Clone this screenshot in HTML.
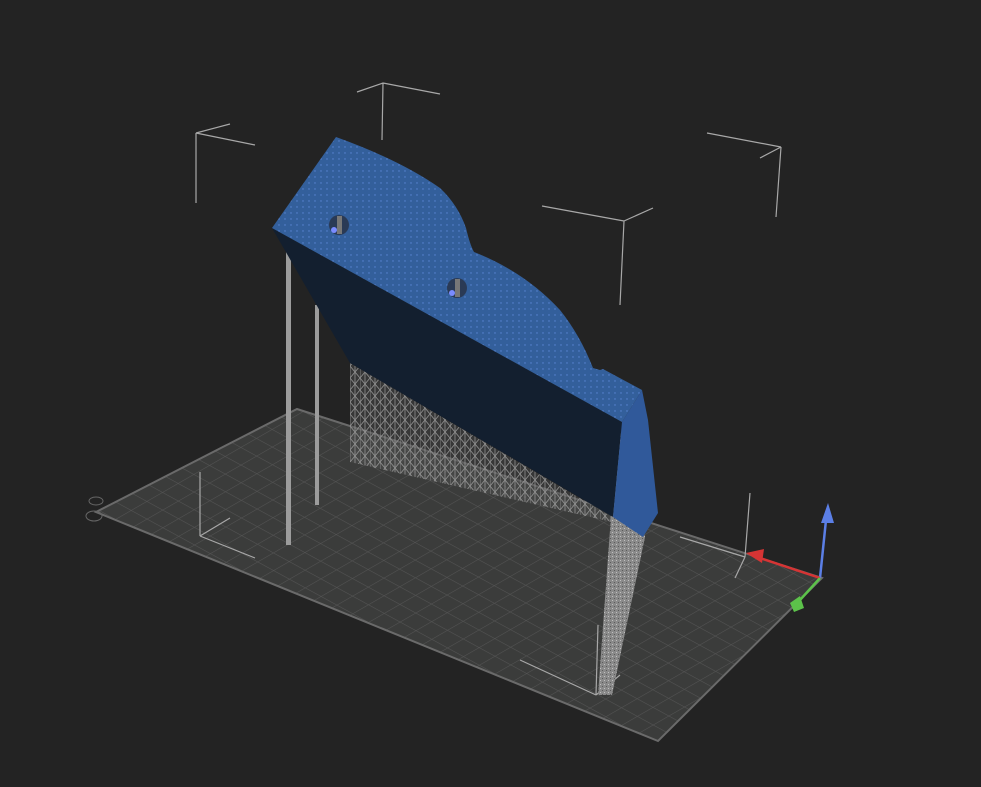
<!DOCTYPE html>
<html><head><meta charset="utf-8"><style>
html,body{margin:0;padding:0;background:#232323;width:981px;height:787px;overflow:hidden}
svg{display:block}
</style></head><body>
<svg width="981" height="787" viewBox="0 0 981 787" xmlns="http://www.w3.org/2000/svg">
<defs>
<pattern id="grid" width="18" height="18" patternUnits="userSpaceOnUse" patternTransform="matrix(0.88,0.48,-0.87,0.5,0,0)">
<rect width="18" height="18" fill="#3b3c3b"/>
<path d="M0 0H18M0 0V18" stroke="#555" stroke-width="1.2"/>
</pattern>
<pattern id="lat" width="10" height="12" patternUnits="userSpaceOnUse">
<path d="M5 0L10 6L5 12L0 6Z M5 0V12 M0 0V12" stroke="#a0a0a0" stroke-width="0.8" fill="none"/>
</pattern>
<pattern id="noise" width="4" height="4" patternUnits="userSpaceOnUse">
<rect width="4" height="4" fill="#8a8a8a"/><rect width="1" height="1" fill="#c0c0c0"/><rect x="2" y="2" width="1" height="1" fill="#5a5a5a"/>
</pattern>
<pattern id="dots" width="6" height="6" patternUnits="userSpaceOnUse">
<rect width="6" height="6" fill="#335f9b"/><circle cx="3" cy="3" r="0.7" fill="#5a86d6"/>
</pattern>
</defs>
<rect width="981" height="787" fill="#232323"/>
<polygon points="96,512 297,409 822,578 658,741" fill="url(#grid)" stroke="#6a6a6a" stroke-width="2"/>
<g stroke="#a8a8a8" stroke-width="1.2" fill="none">
<path d="M196,133L230,124M196,133L255,145M196,133L196,203"/>
<path d="M383,83L357,92M383,83L440,94M383,83L382,140"/>
<path d="M781,147L707,133M781,147L760,158M781,147L776,217"/>
<path d="M624,221L542,206M624,221L653,208M624,221L620,305"/>
<path d="M200,536L200,472M200,536L230,518M200,536L255,558"/>
<path d="M596,695L598,625M596,695L520,660M596,695L620,675"/>
<path d="M745,557L750,493M745,557L680,537M745,557L735,578"/>
</g>
<polygon points="350,363 612,517 612,522 350,462" fill="#555" opacity="0.4"/>
<polygon points="350,363 612,517 612,522 350,462" fill="url(#lat)" opacity="0.85"/>
<polygon points="618,420 598,695 612,695 645,537" fill="url(#noise)"/>
<rect x="286" y="240" width="5" height="305" fill="#9c9c9c"/>
<rect x="315" y="305" width="4" height="200" fill="#9c9c9c"/>
<polygon points="272,228 622,422 613,517 350,363" fill="#131f2f"/>
<polygon points="642,390 622,422 613,517 643,537 658,513 648,420" fill="#30599a"/>
<path d="M272,228 L336,137 Q400,160 440,188 Q458,205 466,228 Q470,245 474,252 Q525,272 560,310 Q580,335 593,368 L600,370 L603,369 L642,390 L622,422 Z" fill="url(#dots)"/>
<circle cx="339" cy="225" r="10" fill="#2a3a55"/><rect x="337" y="216" width="5" height="18" fill="#777"/><circle cx="334" cy="230" r="3" fill="#7a8cff"/>
<circle cx="457" cy="288" r="10" fill="#2a3a55"/><rect x="455" y="279" width="5" height="18" fill="#777"/><circle cx="452" cy="293" r="3" fill="#7a8cff"/>
<line x1="820" y1="578" x2="826" y2="520" stroke="#5b7fe6" stroke-width="2.5"/>
<polygon points="828,503 821,523 834,523" fill="#5b7fe6"/>
<line x1="820" y1="578" x2="760" y2="558" stroke="#d63434" stroke-width="2.5"/>
<polygon points="746,553 764,549 762,563" fill="#d63434"/>
<line x1="820" y1="578" x2="800" y2="600" stroke="#5cc24a" stroke-width="2.5"/>
<polygon points="790,603 800,596 804,608 794,612" fill="#5cc24a"/>
<ellipse cx="96" cy="501" rx="7" ry="4" fill="none" stroke="#666"/>
<ellipse cx="94" cy="516" rx="8" ry="5" fill="none" stroke="#666"/>
</svg>
</body></html>
